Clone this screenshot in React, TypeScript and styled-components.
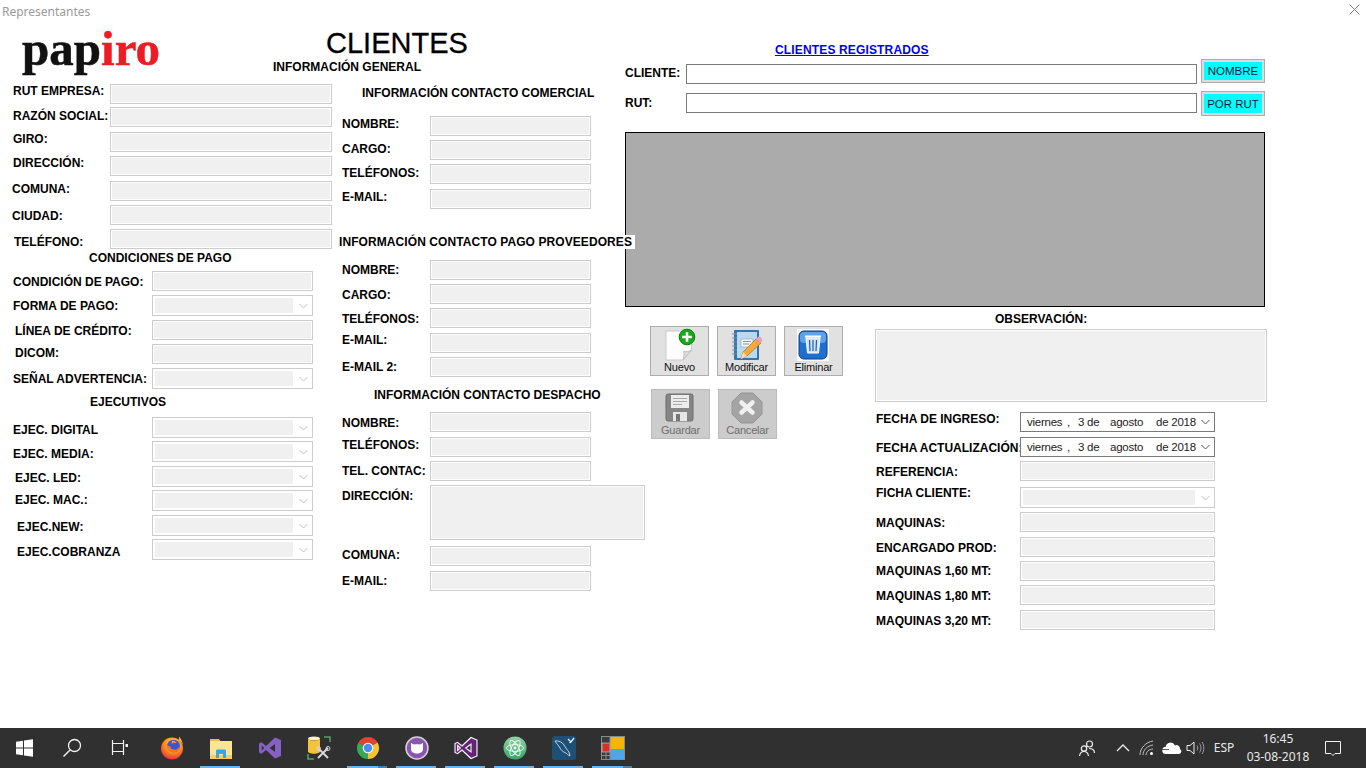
import React from "react";
import styled, { createGlobalStyle } from "styled-components";

const Global = createGlobalStyle`
  html, body { margin: 0; padding: 0; background: #fff; overflow: hidden; }
  * { box-sizing: border-box; }
`;

const Page = styled.div`
  width: 1366px;
  height: 768px;
  display: flex;
  flex-direction: column;
  background: #fff;
  font-family: "Liberation Sans", Arial, sans-serif;
  color: #000;
  overflow: hidden;
`;
const TitleBar = styled.div`
  height: 24px;
  flex: none;
  display: flex;
  align-items: center;
  justify-content: space-between;
  padding: 0 6px 0 2px;
  font: 12px/24px "Noto Sans", sans-serif;
  color: #9a9a9a;
`;
const CloseIcon = styled.svg`
  width: 11px;
  height: 11px;
  margin-top: -6px;
`;
const Main = styled.div`
  flex: 1;
  display: flex;
  min-height: 0;
`;
const FormArea = styled.div`
  width: 620px;
  flex: none;
  display: flex;
  flex-direction: column;
`;
const Header = styled.div`
  height: 60px;
  display: flex;
  flex: none;
`;
const Logo = styled.div`
  width: 273px;
  flex: none;
  padding: 0 0 0 22px;
  font: bold 49px/50px "Liberation Serif", serif;
  transform-origin: 22px 0;
  color: #111;
  -webkit-text-stroke: 0.5px currentColor;
  span { color: #ed1c24; }
`;
const TitleBlock = styled.div`
  display: flex;
  flex-direction: column;
  white-space: nowrap;
`;
const PageTitle = styled.h1`
  margin: 4px 0 0 53px;
  font: 400 29px/30px "Liberation Sans", Arial, sans-serif;
  -webkit-text-stroke: 0.3px currentColor;
`;
const Heading = styled.div<{ $x: number; $mt?: number; $white?: boolean }>`
  margin: ${(p) => p.$mt ?? 0}px 0 0 ${(p) => p.$x}px;
  font: bold 12px/14px "Liberation Sans", Arial, sans-serif;
  white-space: nowrap;
  position: relative;
  z-index: 2;
  width: max-content;
  ${(p) => p.$white && "background: #fff; padding-right: 3px; letter-spacing: 0.08px;"}
`;
const Columns = styled.div`
  display: flex;
  flex: 1;
`;
const LeftColumn = styled.div`
  width: 335px;
  flex: none;
  display: flex;
  flex-direction: column;
`;
const MiddleColumn = styled.div`
  width: 285px;
  flex: none;
  display: flex;
  flex-direction: column;
`;
const Row = styled.div<{ $mt: number }>`
  display: flex;
  align-items: flex-start;
  margin-top: ${(p) => p.$mt}px;
`;
const FieldLabel = styled.label<{ $w: number; $x: number; $y: number }>`
  width: ${(p) => p.$w}px;
  flex: none;
  padding-left: ${(p) => p.$x}px;
  margin-top: ${(p) => p.$y}px;
  font: bold 12px/14px "Liberation Sans", Arial, sans-serif;
  white-space: nowrap;
`;
const TextBox = styled.input<{ $w: number; $h?: number }>`
  display: block;
  width: ${(p) => p.$w}px;
  height: ${(p) => p.$h ?? 20}px;
  flex: none;
  margin: 0;
  padding: 0;
  border: 1px solid #cccccc;
  outline: 1px solid #fff;
  outline-offset: -2px;
  background: #f0f0f0;
`;
const AreaBox = styled.textarea<{ $w: number; $h: number; $mt?: number }>`
  display: block;
  width: ${(p) => p.$w}px;
  height: ${(p) => p.$h}px;
  flex: none;
  margin: ${(p) => p.$mt ?? 0}px 0 0;
  padding: 0;
  resize: none;
  border: 1px solid #cccccc;
  outline: 1px solid #fff;
  outline-offset: -2px;
  background: #f0f0f0;
`;
const SelectBox = styled.div<{ $w: number }>`
  width: ${(p) => p.$w}px;
  height: 21px;
  flex: none;
  display: flex;
  align-items: center;
  justify-content: space-between;
  padding: 2px 4px 2px 2px;
  border: 1px solid #cccccc;
  background: #fff;
`;
const SelectFill = styled.div`
  height: 15px;
  flex: 1;
  margin-right: 6px;
  background: #f0f0f0;
`;
const Chevron = styled.svg<{ $dark?: boolean }>`
  width: 9px;
  height: 6px;
  flex: none;
  fill: none;
  stroke: ${(p) => (p.$dark ? "#555" : "#bfbfbf")};
  stroke-width: 1;
`;
const DateBox = styled.div`
  width: 195px;
  height: 20px;
  flex: none;
  display: flex;
  align-items: center;
  padding: 0 4px 0 6px;
  border: 1px solid #7a7a7a;
  background: #fff;
  font: 11.5px/18px "Liberation Sans", Arial, sans-serif;
  letter-spacing: -0.25px;
  color: #222;
  white-space: nowrap;
`;
const DatePart = styled.span<{ $w: number }>`
  width: ${(p) => p.$w}px;
  flex: none;
`;
const RightArea = styled.div`
  flex: 1;
  display: flex;
  flex-direction: column;
  padding-left: 5px;
  min-width: 0;
`;
const RegisteredLink = styled.a`
  margin: 19px 0 0 150px;
  font: bold 12px/14px "Liberation Sans", Arial, sans-serif;
  letter-spacing: 0.15px;
  color: #0000ee;
  text-decoration: underline;
  width: max-content;
`;
const SearchRow = styled.div<{ $mt: number }>`
  display: flex;
  align-items: flex-start;
  margin-top: ${(p) => p.$mt}px;
`;
const SearchLabel = styled.label<{ $y: number }>`
  width: 61px;
  flex: none;
  margin-top: ${(p) => p.$y}px;
  font: bold 12px/14px "Liberation Sans", Arial, sans-serif;
`;
const SearchInput = styled.input<{ $y: number }>`
  width: 511px;
  height: 20px;
  flex: none;
  margin: ${(p) => p.$y}px 4px 0 0;
  padding: 0;
  border: 1px solid #7a7a7a;
  background: #fff;
`;
const CyanButton = styled.button<{ $h: number }>`
  width: 64px;
  height: ${(p) => p.$h}px;
  flex: none;
  padding: 0;
  border: 1px solid #adadad;
  outline: 2px solid #dcdcdc;
  outline-offset: -3px;
  background: #00ffff;
  font: 11.5px/14px "Liberation Sans", Arial, sans-serif;
  color: #001a33;
`;
const DataGrid = styled.div`
  width: 640px;
  height: 175px;
  flex: none;
  margin-top: 16px;
  border: 1px solid #000;
  background: #ababab;
`;
const LowerArea = styled.div`
  display: flex;
`;
const ActionsPanel = styled.div`
  width: 250px;
  flex: none;
  display: flex;
  flex-direction: column;
`;
const ActionRow = styled.div<{ $mt: number; $ml: number }>`
  display: flex;
  gap: 8px;
  margin: ${(p) => p.$mt}px 0 0 ${(p) => p.$ml}px;
`;
const ActionButton = styled.button<{ $off?: boolean }>`
  width: 59px;
  height: 50px;
  padding: 0;
  display: flex;
  flex-direction: column;
  align-items: center;
  justify-content: flex-start;
  border: 1px solid ${(p) => (p.$off ? "#bcbcbc" : "#adadad")};
  background: ${(p) => (p.$off ? "#cccccc" : "#e1e1e1")};
  color: ${(p) => (p.$off ? "#6d6d6d" : "#111")};
  font: 11px/13px "Liberation Sans", Arial, sans-serif;
  letter-spacing: -0.2px;
`;
const ActionIcon = styled.svg`
  width: 34px;
  height: 33px;
  flex: none;
  margin-top: 1px;
  margin-left: -1px;
`;
const SidePanel = styled.div`
  width: 392px;
  flex: none;
  display: flex;
  flex-direction: column;
`;
const TaskBar = styled.div`
  height: 40px;
  flex: none;
  display: flex;
  align-items: stretch;
  background: #303030;
  color: #e8e8e8;
  font: 12px/16px "Noto Sans", sans-serif;
`;
const SystemCell = styled.div`
  width: 48px;
  flex: none;
  display: flex;
  align-items: center;
  justify-content: center;
`;
const AppStrip = styled.div`
  display: flex;
  margin-left: 3px;
`;
const AppCell = styled.div<{ $open?: boolean; $split?: boolean }>`
  width: 49px;
  flex: none;
  position: relative;
  display: flex;
  align-items: center;
  justify-content: center;
  ${(p) =>
    p.$open &&
    `&::after {
      content: "";
      position: absolute;
      left: 4px;
      right: 5px;
      bottom: 0;
      height: 2px;
      background: ${p.$split ? "linear-gradient(90deg, #6db4ea 78%, #4d7fa8 78%)" : "#6db4ea"};
    }`}
`;
const TaskIcon = styled.svg`
  width: 24px;
  height: 24px;
  flex: none;
  overflow: visible;
`;
const Tray = styled.div`
  margin-left: auto;
  display: flex;
  padding-right: 14px;
`;
const TrayCell = styled.div<{ $w: number }>`
  width: ${(p) => p.$w}px;
  flex: none;
  display: flex;
  align-items: center;
  justify-content: center;
`;
const TrayIcon = styled.svg`
  width: 20px;
  height: 20px;
  flex: none;
  overflow: visible;
`;
const Clock = styled.div`
  display: flex;
  flex-direction: column;
  align-items: center;
  font-size: 12px;
  line-height: 18px;
  white-space: nowrap;
`;

type F = { l: string; mt: number; x: number; y: number; kind?: "select" | "date" | "area"; w?: number; h?: number };

const general: F[] = [
  { l: "RUT EMPRESA:", mt: 0, x: 13, y: 0 },
  { l: "RAZÓN SOCIAL:", mt: 3, x: 13, y: 2 },
  { l: "GIRO:", mt: 5, x: 13, y: 0 },
  { l: "DIRECCIÓN:", mt: 4, x: 13, y: 0 },
  { l: "COMUNA:", mt: 5, x: 12, y: 1 },
  { l: "CIUDAD:", mt: 4, x: 12, y: 4 },
  { l: "TELÉFONO:", mt: 4, x: 14, y: 6 },
];
const pago: F[] = [
  { l: "CONDICIÓN DE PAGO:", mt: 6, x: 13, y: 4 },
  { l: "FORMA DE PAGO:", mt: 4, x: 13, y: 4, kind: "select" },
  { l: "LÍNEA DE CRÉDITO:", mt: 4, x: 15, y: 4 },
  { l: "DICOM:", mt: 4, x: 15, y: 2 },
  { l: "SEÑAL ADVERTENCIA:", mt: 4, x: 13, y: 4, kind: "select" },
];
const ejecutivos: F[] = [
  { l: "EJEC. DIGITAL", mt: 8, x: 13, y: 6, kind: "select" },
  { l: "EJEC. MEDIA:", mt: 3, x: 13, y: 6, kind: "select" },
  { l: "EJEC. LED:", mt: 4, x: 15, y: 5, kind: "select" },
  { l: "EJEC. MAC.:", mt: 3, x: 15, y: 3, kind: "select" },
  { l: "EJEC.NEW:", mt: 4, x: 17, y: 5, kind: "select" },
  { l: "EJEC.COBRANZA", mt: 3, x: 17, y: 6, kind: "select" },
];
const comercial: F[] = [
  { l: "NOMBRE:", mt: 16, x: 7, y: 1 },
  { l: "CARGO:", mt: 4, x: 7, y: 2 },
  { l: "TELÉFONOS:", mt: 4, x: 7, y: 2 },
  { l: "E-MAIL:", mt: 5, x: 7, y: 1 },
];
const proveedores: F[] = [
  { l: "NOMBRE:", mt: 11, x: 7, y: 3 },
  { l: "CARGO:", mt: 4, x: 7, y: 4 },
  { l: "TELÉFONOS:", mt: 4, x: 7, y: 4 },
  { l: "E-MAIL:", mt: 5, x: 7, y: 0 },
  { l: "E-MAIL 2:", mt: 4, x: 7, y: 3 },
];
const despacho: F[] = [
  { l: "NOMBRE:", mt: 10, x: 7, y: 4 },
  { l: "TELÉFONOS:", mt: 5, x: 7, y: 1 },
  { l: "TEL. CONTAC:", mt: 4, x: 7, y: 3 },
  { l: "DIRECCIÓN:", mt: 4, x: 7, y: 4, kind: "area", w: 215, h: 55 },
  { l: "COMUNA:", mt: 6, x: 7, y: 2 },
  { l: "E-MAIL:", mt: 5, x: 7, y: 3 },
];
const side: F[] = [
  { l: "FECHA DE INGRESO:", mt: 10, x: 1, y: 0, kind: "date" },
  { l: "FECHA ACTUALIZACIÓN:", mt: 5, x: 1, y: 4, kind: "date" },
  { l: "REFERENCIA:", mt: 4, x: 1, y: 4 },
  { l: "FICHA CLIENTE:", mt: 6, x: 1, y: -1, kind: "select" },
  { l: "MAQUINAS:", mt: 4, x: 1, y: 4 },
  { l: "ENCARGADO PROD:", mt: 5, x: 1, y: 4 },
  { l: "MAQUINAS 1,60 MT:", mt: 4, x: 1, y: 3 },
  { l: "MAQUINAS 1,80 MT:", mt: 4, x: 1, y: 4 },
  { l: "MAQUINAS 3,20 MT:", mt: 5, x: 1, y: 4 },
];

const Down = ({ dark }: { dark?: boolean }) => (
  <Chevron $dark={dark} viewBox="0 0 9 6">
    <path d="M.5 1l4 4 4-4" />
  </Chevron>
);

const DateValue = () => (
  <DateBox>
    <DatePart $w={40}>viernes</DatePart>
    <DatePart $w={11}>,</DatePart>
    <DatePart $w={32}>3 de</DatePart>
    <DatePart $w={46}>agosto</DatePart>
    <DatePart $w={45}>de 2018</DatePart>
    <Down dark />
  </DateBox>
);

const Fields = ({ items, labelW, w }: { items: F[]; labelW: number; w: number }) => (
  <>
    {items.map((f, i) => (
      <Row key={i} $mt={f.mt}>
        <FieldLabel $w={labelW} $x={f.x} $y={f.y}>
          {f.l}
        </FieldLabel>
        {f.kind === "select" ? (
          <SelectBox $w={w}>
            <SelectFill />
            <Down />
          </SelectBox>
        ) : f.kind === "date" ? (
          <DateValue />
        ) : f.kind === "area" ? (
          <AreaBox $w={f.w ?? w} $h={f.h ?? 55} disabled />
        ) : (
          <TextBox $w={w} disabled />
        )}
      </Row>
    ))}
  </>
);

const NewIcon = () => (
  <ActionIcon viewBox="0 0 34 33">
    <path d="M4 3H29.500V22L21 32H4z" fill="#fdfdfd" stroke="#c9c9c9" />
    <path d="M21 32c1-3 1.500-6 .5-8.500 3 .5 5.500 .2 8-1.500z" fill="#dedede" stroke="#bdbdbd" />
    <circle cx="25" cy="9" r="7.800" fill="#18a818" stroke="#0b7d0b" />
    <path d="M25 4.200v9.600M20.200 9h9.600" stroke="#fff" strokeWidth="2.600" />
  </ActionIcon>
);
const EditIcon = () => (
  <ActionIcon viewBox="0 0 34 33">
    <rect x="5" y="2" width="25" height="30" rx="1" fill="#2e76b6" />
    <rect x="8" y="4" width="20" height="26" fill="#bcd8f0" />
    <g fill="none" stroke="#7f8d99" strokeWidth="1.200">
      <path d="M3 6h5M3 10h5M3 14h5M3 18h5M3 22h5M3 26h5" />
    </g>
    <rect x="12" y="11" width="12" height="8" fill="#f2f5f8" stroke="#8aa0b3" strokeWidth=".6" />
    <path d="M14 13.500h8M14 16h6" stroke="#6f7f8e" strokeWidth=".8" />
    <path d="M12 31l2-7 13-13 5 4-14 13z" fill="#f3a93c" stroke="#b36f17" strokeWidth=".7" />
    <path d="M27 11l2-2c1-1 3 0 4 2 .5 1 .2 2-.5 3l-1.500 1z" fill="#e7a0c6" />
    <path d="M12 31l2-7 4 4z" fill="#f6dfb8" />
  </ActionIcon>
);
const TrashIcon = () => (
  <ActionIcon viewBox="0 0 34 33">
    <rect x="1" y="1" width="32" height="32" fill="#fafafa" />
    <rect x="3" y="3" width="28" height="28" rx="5" fill="#1f6fd0" stroke="#123f7e" />
    <rect x="4" y="4" width="26" height="11" rx="4" fill="#5ea3ea" />
    <path d="M10 10h14l-1.500 15h-11z" fill="#cfe3f8" stroke="#fff" />
    <path d="M9 8.500h16" stroke="#fff" strokeWidth="2" />
    <path d="M13.500 12l.5 11M17 12v11M20.500 12l-.5 11" stroke="#1f5fb0" strokeWidth="1.200" />
  </ActionIcon>
);
const SaveIcon = () => (
  <ActionIcon viewBox="0 0 34 33">
    <rect x="3" y="3" width="27" height="27" rx="2" fill="#858585" stroke="#6f6f6f" />
    <rect x="8" y="4" width="18" height="13" fill="#ececec" />
    <path d="M10 7.500h14M10 10.500h14M10 13.500h9" stroke="#a9a9a9" />
    <rect x="10" y="21" width="14" height="9" fill="#e6e6e6" />
    <rect x="13" y="23" width="4" height="7" fill="#777" />
  </ActionIcon>
);
const CancelIcon = () => (
  <ActionIcon viewBox="0 0 34 33">
    <path d="M11 2h12l9 9v12l-9 9H11l-9-9V11z" fill="#a4a4a4" stroke="#959595" />
    <path d="M11.500 11.500l11 10M22.500 11.500l-11 10" stroke="#f0f0f0" strokeWidth="4.500" strokeLinecap="round" />
  </ActionIcon>
);

const vsPath = "M17 1.500L8 10 3.500 6.300 1 7.500v9l2.500 1.200L8 14l9 8.500 6-2.500V4zM17 8v8l-5.300-4zM3.700 9.500L6.300 12l-2.600 2.500z";

const apps: { open?: boolean; split?: boolean; node: React.ReactNode }[] = [
  {
    node: (
      <TaskIcon viewBox="0 0 24 24">
        <defs>
          <radialGradient id="ff" cx="55%" cy="30%" r="75%">
            <stop offset="0" stopColor="#ffdd33" />
            <stop offset=".55" stopColor="#ff8a1e" />
            <stop offset="1" stopColor="#e3224a" />
          </radialGradient>
        </defs>
        <circle cx="12" cy="12.500" r="11" fill="url(#ff)" />
        <path d="M19 .5c3 3 4 7 4 10 0-3-2-5-4-6z" fill="#ffb52e" />
        <circle cx="13.500" cy="10" r="6.300" fill="#3a54d6" />
        <path d="M6 8c1 6 5 9 9 8 3-.8 4-3 4-5-1 2-3 3-5 2.500C12 13 10 13 10.500 10.500 8.500 10.500 7 9.500 6 8z" fill="#ff7a1a" />
        <path d="M12 5c2-.5 4 .5 4.500 2.500-2-1-3-1-5 .5z" fill="#ff9a1f" />
      </TaskIcon>
    ),
  },
  {
    open: true,
    node: (
      <TaskIcon viewBox="0 0 24 24">
        <path d="M1 3h9l2 3h11v3H1z" fill="#e9bf52" />
        <rect x="1" y="5" width="22" height="18" fill="#fde595" />
        <rect x="1" y="19" width="22" height="4" fill="#f2cf6a" />
        <path d="M7 22v-7c0-1 .5-1.500 1.500-1.500h7c1 0 1.500.5 1.500 1.500v7h-3v-4h-4v4z" fill="#3aa5e0" />
      </TaskIcon>
    ),
  },
  {
    node: (
      <TaskIcon viewBox="0 0 24 24">
        <path d={vsPath} fillRule="evenodd" fill="#8661c5" />
      </TaskIcon>
    ),
  },
  {
    node: (
      <TaskIcon viewBox="0 0 24 24">
        <ellipse cx="7" cy="2.500" rx="6" ry="2" fill="#fff3c4" />
        <path d="M1 2.500v13c0 1.200 2.700 2.200 6 2.200s6-1 6-2.200v-13c0 1.200-2.700 2.200-6 2.200s-6-1-6-2.200z" fill="#f5c33b" />
        <path d="M17 1h6v5M1 18v5h6" fill="none" stroke="#57a064" strokeWidth="1.500" />
        <path d="M11 12l10 10M21 12L11 22" stroke="#d6d6d6" strokeWidth="2" />
        <circle cx="11.500" cy="12.500" r="2" fill="none" stroke="#d6d6d6" />
        <circle cx="21" cy="12.500" r="2" fill="none" stroke="#d6d6d6" />
      </TaskIcon>
    ),
  },
  {
    open: true,
    split: true,
    node: (
      <TaskIcon viewBox="0 0 24 24">
        <path d="M12 12L2.470 6.500A11 11 0 0 1 21.530 6.500z" fill="#e0432f" />
        <path d="M12 12L21.530 6.500A11 11 0 0 1 12 23z" fill="#f6c431" />
        <path d="M12 12L12 23A11 11 0 0 1 2.470 6.500z" fill="#3aa757" />
        <circle cx="12" cy="12" r="5.300" fill="#fff" />
        <circle cx="12" cy="12" r="4.200" fill="#4b8ef0" />
      </TaskIcon>
    ),
  },
  {
    open: true,
    node: (
      <TaskIcon viewBox="0 0 24 24">
        <circle cx="12" cy="12" r="11" fill="#8a57b0" stroke="#d5d0da" strokeWidth="1.500" />
        <path d="M6 7l3 1.500c2-.5 4-.5 6 0L18 7v6c0 3-3 4.500-6 4.500S6 16 6 13z" fill="#fff" />
      </TaskIcon>
    ),
  },
  {
    open: true,
    node: (
      <TaskIcon viewBox="0 0 24 24">
        <path d={vsPath} fillRule="evenodd" fill="#68217a" stroke="#fff" strokeWidth="1.100" />
      </TaskIcon>
    ),
  },
  {
    open: true,
    node: (
      <TaskIcon viewBox="0 0 24 24">
        <defs>
          <linearGradient id="atom" x1="0" y1="0" x2="0" y2="1">
            <stop offset="0" stopColor="#8fd3a3" />
            <stop offset="1" stopColor="#3aa56b" />
          </linearGradient>
        </defs>
        <circle cx="12" cy="12" r="11.500" fill="url(#atom)" />
        <g fill="none" stroke="#f2fff6" strokeWidth=".9">
          <ellipse cx="12" cy="12" rx="8.500" ry="3.400" transform="rotate(60 12 12)" />
          <ellipse cx="12" cy="12" rx="8.500" ry="3.400" transform="rotate(-60 12 12)" />
          <ellipse cx="12" cy="12" rx="8.500" ry="3.400" />
        </g>
        <circle cx="12" cy="12" r="1.400" fill="#fff" />
      </TaskIcon>
    ),
  },
  {
    open: true,
    node: (
      <TaskIcon viewBox="0 0 24 24">
        <rect width="24" height="24" rx="3" fill="#1e4f75" />
        <path d="M3 5c4-.5 7 1 9 4 2 3 3 5 5 7l1 4c-2-1-3-2-4-3-3-1-5-3-6-5C7 10 5 8 3 5z" fill="none" stroke="#cfe0ea" strokeWidth=".9" />
        <path d="M16 3l3 3M22 2l-3 4-1.500 1" stroke="#e7eef3" strokeWidth="1.300" fill="none" />
      </TaskIcon>
    ),
  },
  {
    open: true,
    split: true,
    node: (
      <TaskIcon viewBox="0 0 24 24">
        <rect x=".5" y=".5" width="23" height="23" fill="#3b3b3b" stroke="#8a8a8a" />
        <rect x="9" y="1" width="14" height="12" fill="#f2b705" />
        <rect x="9" y="13" width="14" height="10" fill="#4fa5ea" />
        <rect x="1" y="7" width="8" height="9" fill="#d5322a" stroke="#ddd" strokeWidth=".6" />
        <path d="M1 19.500h8M5 16v8M9 1v22" stroke="#8a8a8a" />
      </TaskIcon>
    ),
  },
];

export default function App() {
  return (
    <Page>
      <Global />
      <TitleBar>
        <span>Representantes</span>
        <CloseIcon viewBox="0 0 11 11">
          <path d="M.5.5l10 10M10.500.5l-10 10" stroke="#7a7a7a" fill="none" />
        </CloseIcon>
      </TitleBar>
      <Main>
        <FormArea>
          <Header>
            <Logo>
              pap<span>iro</span>
            </Logo>
            <TitleBlock>
              <PageTitle>CLIENTES</PageTitle>
              <Heading $x={0} $mt={2}>
                INFORMACIÓN GENERAL
              </Heading>
            </TitleBlock>
          </Header>
          <Columns>
            <LeftColumn>
              <Fields items={general} labelW={110} w={222} />
              <Heading $x={89} $mt={2}>
                CONDICIONES DE PAGO
              </Heading>
              <Fields items={pago} labelW={152} w={161} />
              <Heading $x={90} $mt={6}>
                EJECUTIVOS
              </Heading>
              <Fields items={ejecutivos} labelW={152} w={161} />
            </LeftColumn>
            <MiddleColumn>
              <Heading $x={27} $mt={2}>
                INFORMACIÓN CONTACTO COMERCIAL
              </Heading>
              <Fields items={comercial} labelW={95} w={161} />
              <Heading $x={4} $mt={26} $white>
                INFORMACIÓN CONTACTO PAGO PROVEEDORES
              </Heading>
              <Fields items={proveedores} labelW={95} w={161} />
              <Heading $x={39} $mt={11}>
                INFORMACIÓN CONTACTO DESPACHO
              </Heading>
              <Fields items={despacho} labelW={95} w={161} />
            </MiddleColumn>
          </Columns>
        </FormArea>
        <RightArea>
          <RegisteredLink href="#">CLIENTES REGISTRADOS</RegisteredLink>
          <SearchRow $mt={2}>
            <SearchLabel $y={7}>CLIENTE:</SearchLabel>
            <SearchInput $y={5} />
            <CyanButton $h={24}>NOMBRE</CyanButton>
          </SearchRow>
          <SearchRow $mt={7}>
            <SearchLabel $y={5}>RUT:</SearchLabel>
            <SearchInput $y={2} />
            <CyanButton $h={25}>POR RUT</CyanButton>
          </SearchRow>
          <DataGrid />
          <LowerArea>
            <ActionsPanel>
              <ActionRow $mt={19} $ml={25}>
                <ActionButton>
                  <NewIcon />
                  Nuevo
                </ActionButton>
                <ActionButton>
                  <EditIcon />
                  Modificar
                </ActionButton>
                <ActionButton>
                  <TrashIcon />
                  Eliminar
                </ActionButton>
              </ActionRow>
              <ActionRow $mt={13} $ml={26}>
                <ActionButton $off>
                  <SaveIcon />
                  Guardar
                </ActionButton>
                <ActionButton $off>
                  <CancelIcon />
                  Cancelar
                </ActionButton>
              </ActionRow>
            </ActionsPanel>
            <SidePanel>
              <Heading $x={120} $mt={5}>
                OBSERVACIÓN:
              </Heading>
              <AreaBox $w={392} $h={73} $mt={3} disabled />
              <Fields items={side} labelW={145} w={195} />
            </SidePanel>
          </LowerArea>
        </RightArea>
      </Main>
      <TaskBar>
        <SystemCell>
          <TaskIcon viewBox="0 0 24 24">
            <path d="M4 5.800l7-1v6.700H4zM12 4.600l9-1.300v8.200h-9zM4 12.500h7v6.700l-7-1zM12 12.500h9v8.200l-9-1.300z" fill="#fff" />
          </TaskIcon>
        </SystemCell>
        <SystemCell>
          <TaskIcon viewBox="0 0 24 24">
            <circle cx="14.500" cy="9.500" r="6" fill="none" stroke="#f0f0f0" strokeWidth="1.300" />
            <path d="M10 14l-6.500 6.500" stroke="#f0f0f0" strokeWidth="1.500" />
          </TaskIcon>
        </SystemCell>
        <SystemCell>
          <TaskIcon viewBox="0 0 24 24">
            <path d="M4.500 4v3.500h11V4M4.500 19v-3.500h11V19M4.500 7.500v8M15.500 7.500v8" fill="none" stroke="#f0f0f0" strokeWidth="1.200" />
            <rect x="17.500" y="8" width="2.500" height="3" fill="#f0f0f0" />
          </TaskIcon>
        </SystemCell>
        <AppStrip>
          {apps.map((a, i) => (
            <AppCell key={i} $open={a.open} $split={a.split}>
              {a.node}
            </AppCell>
          ))}
        </AppStrip>
        <Tray>
          <TrayCell $w={48}>
            <TrayIcon viewBox="0 0 20 20">
              <g fill="none" stroke="#eee" strokeWidth="1.200">
                <circle cx="12.500" cy="6" r="3" />
                <circle cx="7" cy="10.500" r="2.700" />
                <path d="M2.500 18c.5-3 2-4.500 4.500-4.500s4 1.500 4.500 4.500M12 10.500c3 0 5.500 1.500 5.500 4.500" />
              </g>
            </TrayIcon>
          </TrayCell>
          <TrayCell $w={24}>
            <TrayIcon viewBox="0 0 20 20">
              <path d="M4 13l6-6 6 6" fill="none" stroke="#eee" strokeWidth="1.300" />
            </TrayIcon>
          </TrayCell>
          <TrayCell $w={24}>
            <TrayIcon viewBox="0 0 20 20">
              <g fill="none" stroke="#bdbdbd" strokeWidth="1">
                <path d="M3 17C3 10 9 4 16 3M6 17c0-5 4-9 10-10M9 17c0-3 3-6 7-6" />
              </g>
              <circle cx="14.500" cy="15.500" r="1.500" fill="#fff" />
            </TrayIcon>
          </TrayCell>
          <TrayCell $w={24}>
            <TrayIcon viewBox="0 0 20 20">
              <path d="M5 16a3.500 3.500 0 0 1-.5-7 5 5 0 0 1 9.500-1.500A3.500 3.500 0 0 1 19 11a2.700 2.700 0 0 1-1 5z" fill="#fff" />
              <path d="M1 11.500h7" stroke="#303030" strokeWidth=".8" />
            </TrayIcon>
          </TrayCell>
          <TrayCell $w={23}>
            <TrayIcon viewBox="0 0 20 20">
              <path d="M2 7.500h3l4-3.500v12l-4-3.500H2z" fill="none" stroke="#eee" />
              <path d="M12 7.500c1 1.500 1 3.500 0 5M14.500 5.500c2 3 2 6 0 9M17 4c2.500 3.500 2.500 8.500 0 12" fill="none" stroke="#a0a0a0" />
            </TrayIcon>
          </TrayCell>
          <TrayCell $w={36}>ESP</TrayCell>
          <TrayCell $w={72}>
            <Clock>
              <span>16:45</span>
              <span>03-08-2018</span>
            </Clock>
          </TrayCell>
          <TrayCell $w={38}>
            <TrayIcon viewBox="0 0 20 20">
              <path d="M2.500 3.500h15v12H12l-2 2-2-2H2.500z" fill="none" stroke="#f0f0f0" />
            </TrayIcon>
          </TrayCell>
        </Tray>
      </TaskBar>
    </Page>
  );
}
